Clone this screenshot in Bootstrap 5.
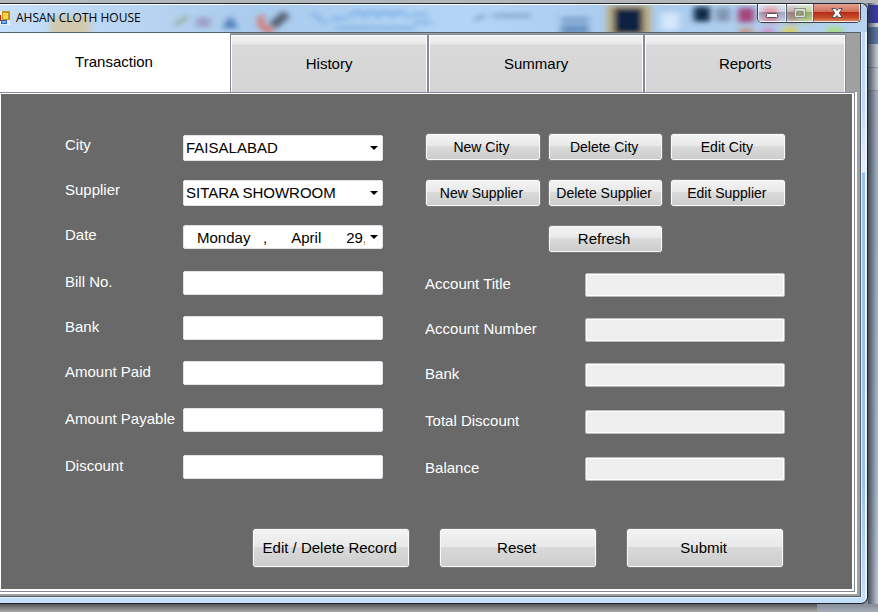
<!DOCTYPE html>
<html lang="en">
<head>
<meta charset="utf-8">
<meta name="viewport" content="width=device-width, initial-scale=1">
<title>AHSAN CLOTH HOUSE</title>
<link href="https://cdn.jsdelivr.net/npm/bootstrap@5.3.0/dist/css/bootstrap.min.css" rel="stylesheet">
<style>
body{font-family:"Liberation Sans",Arial,sans-serif;font-size:15px;line-height:20px;color:#000;background:linear-gradient(#b4b8bc 0 3px,#8a9099 3px)}
.desk{padding-top:3px}
.frame{border:1px solid #1c2630;border-left:0;border-radius:0 7px 7px 0;background:linear-gradient(90deg,transparent calc(100% - 2px),#e8f3fc calc(100% - 2px)),linear-gradient(#bcdaf8,#c3d8f5 100px,#e4effa 168px,#9dc2e9 169px,#9dc2e9 480px,#c4e0fb);overflow:hidden;padding:0 6px 6px 0;position:relative}
.titlebar{height:28px;margin-right:-6px;position:relative;border-top:1px solid #fff;background:linear-gradient(90deg,#c6dffa,#b9d5f1 130px,#a9cbed 260px,#b4d5f6 470px,#a9cbee 610px,#b5d2ef)}
.titlebar .glass{position:absolute;inset:0;width:100%;height:100%}
.caption{position:relative;font:12px/26px "Open Sans","Noto Sans",sans-serif;gap:6px}
.winbtns{position:absolute;right:6px;top:-1px;height:19px;border:1px solid #39424c;border-top:0;border-radius:0 0 5px 5px;overflow:hidden}
.winbtns button{border:1px solid #ffffffb0;border-top:0;padding:0;display:flex;align-items:center;justify-content:center;background:linear-gradient(#ffffff90,#ffffff50 45%,#5d6c8048 50%,#ffffff30);width:28px}
.winbtns button+button{border-left:1px solid #56606c;width:27px}
.winbtns button.win-close{width:47px;background:linear-gradient(#e5a493,#cf6f59 45%,#b42d18 50%,#c94c2b 80%,#dc8157)}
.client{background:#a0a0a0;border:1px solid #55606e;border-left:0;outline:1px solid #e5f2fd}
.tabs-row{display:grid;grid-template-columns:230fr 198fr 216fr 202fr;padding:1px 14px 0 0}
.tabs-row button{border:1px solid #868a96;border-bottom:0;padding:0;border-radius:0;height:58px;font-size:15px;background:linear-gradient(#f3f3f3,#e8e8e8 9px,#d9d9d9 10px,#d4d4d4);box-shadow:inset 1px 1px #fff,inset -1px 0 #fff;color:#000}
.tabs-row button.active{background:#fff;border:0;box-shadow:none;padding:0 2px 2px 0;margin-top:-1px;height:59px}
.sheet-outer{border-right:2px solid #fff;border-bottom:2px solid #fff;margin:0 3px 2px 0;background:#868a96;padding:1px 1px 1px 0}
.sheet{background:#696969;border:solid #fff;border-width:1px 2px 2px 1px;padding:40px 67px 22px 64px}
.cols{display:grid;grid-template-columns:318fr 360fr;column-gap:42px}
.fields{display:flex;flex-direction:column}
.field{display:grid;grid-template-columns:118fr 200fr;color:#fff}
.field label{line-height:20px;white-space:nowrap}
.right .field{grid-template-columns:160fr 200fr}
.low label{line-height:22px}
.field input,.field select{width:100%;height:24px;border:1px solid #dfe3ea;border-radius:2px;background:#fff;padding:0 2px;font-size:15px;color:#000;outline:0}
.field select,.field .date{appearance:none;background:#fff url("data:image/svg+xml,%3Csvg xmlns='http://www.w3.org/2000/svg' width='8' height='4'%3E%3Cpath d='M0 0h8L4 4z'/%3E%3C/svg%3E") no-repeat right 4px center}
.field select{height:26px}
.field .date{padding:0 17px 0 13px;background-clip:padding-box}
.right .field input{background:#efefef;border-color:#b9b9b9;box-shadow:inset 0 0 0 1px #fff}
.g-top{gap:19px;padding-top:1px}
.low{gap:21px;padding-top:22px}
.low .field:nth-child(n+4){margin-top:2px}
.right .low{padding-top:21px}
.actions{display:grid;grid-template-columns:repeat(3,1fr);gap:20px 9px;padding-left:1px}
.face{border:1px solid #f8f8f8;outline:1px solid #7a7a7a;border-radius:2px;background:linear-gradient(#f3f3f3,#e8e8e8 47%,#dadada 48%,#cdcdcd);color:#000;padding:0 3px 0 0;height:26px;font-size:14px;line-height:20px;white-space:nowrap}
.face.mid{grid-column:2;font-size:15px}
.bottom{padding-top:48px;gap:31px;padding-right:2px}
.bottom .face{width:156px;height:38px;font-size:15px}
.backdrop{width:11px;background:linear-gradient(90deg,#30353fcc,transparent 9px),linear-gradient(#b9bdc4 0 2px,#3838b5 2px 20px,#c9ced4 20px 24px,#5575a6 24px 41px,#b9c5d0 41px 64px,#8d99a6 64px 65px,#b5c0cc 65px 87px,#8d99a6 87px 88px,#9eacc0 88px 237px,#abb5c6 480px,#b4bfd2)}
.shade{height:9px;background:linear-gradient(90deg,transparent 93%,#a3afc399 93%),linear-gradient(#555,#b4b4b4)}
</style>
<script src="https://cdn.jsdelivr.net/npm/bootstrap@5.3.0/dist/js/bootstrap.bundle.min.js"></script>
</head>
<body>
<div class="desk d-flex flex-column min-vh-100">
 <div class="d-flex flex-grow-1">
  <div class="frame flex-grow-1 d-flex flex-column">
   <header class="titlebar">
    <svg class="glass" viewBox="0 0 866 28" preserveAspectRatio="none" aria-hidden="true">
     <defs><filter id="soft" x="-20%" y="-50%" width="140%" height="200%"><feGaussianBlur stdDeviation="3"/></filter></defs>
     <g filter="url(#soft)">
      <path fill="#d0c9ae" d="M50 11h40v22H50z"/>
      <path fill="none" stroke="#98a898" stroke-width="4" d="M175 21l12-9"/>
      <path fill="#9b9fc8" d="M196 13h14v10h-14z"/><path fill="#4f7cba" d="M222 24l8-13 8 13z"/>
      <path fill="none" stroke="#d9726a" stroke-width="6" d="M262 11q-6 13 10 16"/>
      <path fill="none" stroke="#56616e" stroke-width="9" d="M272 22l14-13"/>
      <path fill="none" stroke="#78ade4" stroke-width="3" d="M312 8l14 12m5-6h14m5 0a6 6 0 1 1 14 0a6 6 0 1 1 14 0a6 6 0 1 1 14 0a6 6 0 1 1 14 0m5-4h16m-14 8h18M335 24h80"/>
      <path fill="none" stroke="#85a5c8" stroke-width="4" d="M474 16l10-6m8 1h38"/>
      <path fill="#6c95c2" d="M560 13h28v4h-28zm0 7h28v11h-28z"/>
      <path fill="#bcae82" d="M606 0h44v33h-44z"/><path fill="#0c2442" d="M613 3h29v27h-29z"/>
      <path fill="#d4e7fb" d="M660 8h18v18h-18z"/><path fill="#102946" d="M693 2h16v15h-16z"/>
      <path fill="#7f95b1" d="M715 3h14v14h-14z"/><path fill="#a1447a" d="M737 3h16v15h-16z"/>
      <path fill="#d5687f" d="M762 1h15v17h-15z"/><path fill="#ad7868" d="M786 1h10v17h-10z"/>
      <path fill="#a9bd58" d="M797 1h15v17h-15z"/>
      <path fill="#c7968b" d="M738 24h14v8h-14z"/><path fill="#c99ace" d="M760 24h14v8h-14z"/>
      <path fill="#dccf60" d="M782 23h14v9h-14z"/><path fill="#a5df80" d="M826 23h15v9h-15z"/>
     </g>
    </svg>
    <div class="caption d-flex align-items-center">
     <svg width="10" height="14" viewBox="0 0 10 14" aria-hidden="true"><path fill="#e9eef4" d="M0 0h10v14H0z"/><path fill="#b32418" d="M0 4h1v6H0z"/><path fill="#c99215" d="M2 0h8v9H2z"/><path fill="#ffd449" d="M3 2h5v6H3z"/><path fill="#2d65b8" d="M1 9h6v4H1z"/><path fill="#79b0f4" d="M2 10h4v2H2z"/></svg>
     <span>AHSAN CLOTH HOUSE</span>
    </div>
    <div class="winbtns d-flex">
     <button type="button" aria-label="Minimize"><svg width="12" height="18"><rect x=".5" y="9.500" width="11" height="4" rx="1" fill="#fff" stroke="#505563"/></svg></button>
     <button type="button" aria-label="Maximize" disabled><svg width="12" height="18"><path fill="none" stroke="#87908e" d="M.5 4.500h11v9H.5z"/><path fill="none" stroke="#dce2de" d="M1.500 5.500h9v7h-9z"/><path fill="none" stroke="#87908e" d="M3.500 7.500h5v3h-5z"/></svg></button>
     <button type="button" class="win-close" aria-label="Close"><svg width="12" height="18"><path fill="#fff" stroke="#4e5060" d="M.8 4.500h3.500L6 6.500l1.700-2h3.500L8.300 9l2.900 4.500H7.700L6 11.500l-1.700 2H.8L3.700 9z"/></svg></button>
    </div>
   </header>
   <main class="client flex-grow-1 d-flex flex-column">
    <div class="tabs-row" role="tablist">
     <button type="button" role="tab" class="active" aria-selected="true">Transaction</button>
     <button type="button" role="tab" aria-selected="false">History</button>
     <button type="button" role="tab" aria-selected="false">Summary</button>
     <button type="button" role="tab" aria-selected="false">Reports</button>
    </div>
    <div class="sheet-outer flex-grow-1 d-flex flex-column">
     <form class="sheet flex-grow-1 d-flex flex-column justify-content-between">
      <div class="cols">
       <div>
        <div class="fields g-top">
         <div class="field"><label for="city">City</label><select id="city"><option>FAISALABAD</option></select></div>
         <div class="field"><label for="supplier">Supplier</label><select id="supplier"><option>SITARA SHOWROOM</option></select></div>
         <div class="field"><label for="date">Date</label><input id="date" class="date" type="text" value="Monday   ,      April      29,"></div>
        </div>
        <div class="fields low">
         <div class="field"><label for="bill">Bill No.</label><input id="bill" type="text"></div>
         <div class="field"><label for="bank">Bank</label><input id="bank" type="text"></div>
         <div class="field"><label for="paid">Amount Paid</label><input id="paid" type="text"></div>
         <div class="field"><label for="payable">Amount Payable</label><input id="payable" type="text"></div>
         <div class="field"><label for="discount">Discount</label><input id="discount" type="text"></div>
        </div>
       </div>
       <div class="right">
        <div class="actions">
         <button type="button" class="face">New City</button><button type="button" class="face">Delete City</button><button type="button" class="face">Edit City</button>
         <button type="button" class="face">New Supplier</button><button type="button" class="face">Delete Supplier</button><button type="button" class="face">Edit Supplier</button>
         <button type="button" class="face mid">Refresh</button>
        </div>
        <div class="fields low">
         <div class="field"><label for="title">Account Title</label><input id="title" type="text" readonly></div>
         <div class="field"><label for="number">Account Number</label><input id="number" type="text" readonly></div>
         <div class="field"><label for="bank2">Bank</label><input id="bank2" type="text" readonly></div>
         <div class="field"><label for="total">Total Discount</label><input id="total" type="text" readonly></div>
         <div class="field"><label for="balance">Balance</label><input id="balance" type="text" readonly></div>
        </div>
       </div>
      </div>
      <div class="bottom d-flex justify-content-end">
       <button type="button" class="face">Edit / Delete Record</button>
       <button type="reset" class="face">Reset</button>
       <button type="submit" class="face">Submit</button>
      </div>
     </form>
    </div>
   </main>
  </div>
  <div class="backdrop"></div>
 </div>
 <div class="shade"></div>
</div>
</body>
</html>
